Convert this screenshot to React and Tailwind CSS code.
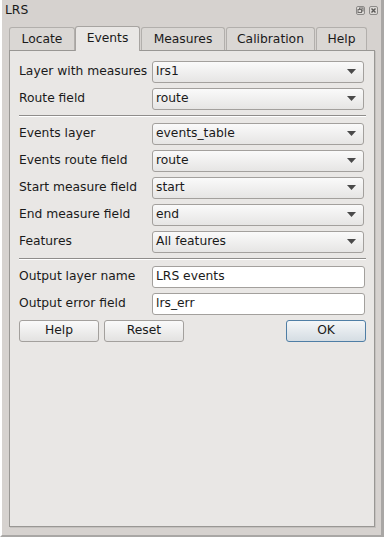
import React from 'react';

const font = { fontFamily: '"DejaVu Sans", "Liberation Sans", sans-serif' };

const Combo = ({ value }) => (
  <div className="flex items-center justify-between h-[22px] w-[212px] rounded-[3px] border border-[#a3a09d] bg-gradient-to-b from-[#fafafa] to-[#e6e5e4] pl-[3px] pr-[7px]">
    <span>{value}</span>
    <svg width="9" height="5" viewBox="0 0 9 5">
      <path d="M0 0 L9 0 L4.5 5 Z" fill="#4a4a4a" />
    </svg>
  </div>
);

const Input = ({ value }) => (
  <div className="flex items-center h-[22px] w-[213px] rounded-[3px] border border-[#a3a09d] bg-white px-[3px]">
    {value}
  </div>
);

const Row = ({ label, children }) => (
  <div className="flex items-center h-[27px]">
    <div className="w-[133px] shrink-0">{label}</div>
    {children}
  </div>
);

const Separator = () => (
  <div className="h-px bg-[#8f8d8b] my-[3px] border-b border-white box-content" />
);

const Button = ({ label, primary }) => (
  <div
    className={`flex items-center justify-center h-[22px] w-[80px] rounded-[3px] border bg-gradient-to-b ${
      primary
        ? 'border-[#4f7ea5] from-[#f4f6f8] to-[#d5dde3]'
        : 'border-[#a3a09d] from-[#fafafa] to-[#e3e2e1]'
    }`}
  >
    {label}
  </div>
);

const tabs = ['Locate', 'Events', 'Measures', 'Calibration', 'Help'];
const tabWidths = ['w-[66px]', 'w-[65px]', 'w-[84px]', 'w-[89px]', 'w-[51px]'];

export default function App() {
  return (
    <div
      className="w-[384px] h-[537px] bg-[#d6d2cf] border-l-2 border-l-white border-r-[3px] border-r-[#a9a7a5] border-b-2 border-b-[#a9a7a5] flex flex-col text-[12.3px] text-[#1a1a1a]"
      style={font}
    >
      <div className="flex items-center justify-between h-[21px] pl-[3px] pr-[3px]">
        <span>LRS</span>
        <div className="flex gap-[4px]">
          <svg width="9" height="9" viewBox="0 0 9 9">
            <rect x="0.5" y="0.5" width="8" height="8" rx="1.5" fill="#dcd9d6" stroke="#8c8a88" />
            <rect x="3.5" y="2" width="3.5" height="3" fill="none" stroke="#6e6c6a" />
            <rect x="2" y="3.5" width="3.5" height="3" fill="#dcd9d6" stroke="#6e6c6a" />
          </svg>
          <svg width="9" height="9" viewBox="0 0 9 9">
            <rect x="0.5" y="0.5" width="8" height="8" rx="1.5" fill="#dcd9d6" stroke="#8c8a88" />
            <path d="M2.5 2.5 L6.5 6.5 M6.5 2.5 L2.5 6.5" stroke="#5a5856" strokeWidth="1.4" />
          </svg>
        </div>
      </div>
      <div className="flex items-end pl-[6px] h-[29px]">
        {tabs.map((t, i) => {
          const sel = t === 'Events';
          return (
            <div
              key={t}
              className={`${tabWidths[i]} flex items-center justify-center rounded-t-[3px] border border-b-0 ${
                sel
                  ? 'h-[25px] bg-[#e9e7e5] border-[#a7a4a1] relative z-10 mb-[-1px] pb-[2px]'
                  : 'h-[23px] bg-[#dad7d4] border-[#b2afac] ml-[1px]'
              }`}
            >
              {t}
            </div>
          );
        })}
      </div>
      <div className="ml-[7px] mr-[6px] mb-[8px] flex-1 bg-[#e9e7e5] border border-[#999794] shadow-[1px_1px_0_#c4c1be] pl-[9px] pr-[8px] pt-[7px]">
        <Row label="Layer with measures"><Combo value="lrs1" /></Row>
        <Row label="Route field"><Combo value="route" /></Row>
        <Separator />
        <Row label="Events layer"><Combo value="events_table" /></Row>
        <Row label="Events route field"><Combo value="route" /></Row>
        <Row label="Start measure field"><Combo value="start" /></Row>
        <Row label="End measure field"><Combo value="end" /></Row>
        <Row label="Features"><Combo value="All features" /></Row>
        <Separator />
        <Row label="Output layer name"><Input value="LRS events" /></Row>
        <Row label="Output error field"><Input value="lrs_err" /></Row>
        <div className="flex items-center h-[27px]">
          <Button label="Help" />
          <div className="ml-[5px]"><Button label="Reset" /></div>
          <div className="ml-auto"><Button label="OK" primary /></div>
        </div>
      </div>
    </div>
  );
}
